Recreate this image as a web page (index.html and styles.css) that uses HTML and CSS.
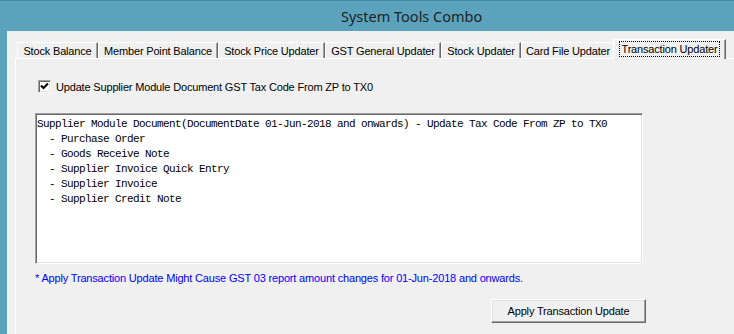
FILE: index.html
```html
<!DOCTYPE html>
<html lang="en">
<head>
    <meta charset="UTF-8">
    <meta name="viewport" content="width=device-width, initial-scale=1.0">
    <title>System Tools Combo</title>
    <link rel="stylesheet" href="styles.css">
</head>
<body>
    <div class="window">
        <div class="titlebar">System Tools Combo</div>
        <div class="client">
            <div class="tabs">
                <div class="tab tab-stock">Stock Balance</div>
                <div class="tab tab-member">Member Point Balance</div>
                <div class="tab tab-price">Stock Price Updater</div>
                <div class="tab tab-gst">GST General Updater</div>
                <div class="tab tab-stockupd">Stock Updater</div>
                <div class="tab tab-card">Card File Updater</div>
                <div class="tab tab-trans active"><span class="focus">Transaction Updater</span></div>
            </div>
            <div class="panel">
                <label class="check-row">
                    <span class="checkbox">
                        <svg width="9" height="9" viewBox="0 0 9 9">
                            <path d="M1 3.5 L3.5 6 L8 1.5" fill="none" stroke="#000" stroke-width="2"/>
                        </svg>
                    </span>
                    Update Supplier Module Document GST Tax Code From ZP to TX0
                </label>
                <pre class="memo">Supplier Module Document(DocumentDate 01-Jun-2018 and onwards) - Update Tax Code From ZP to TX0
  - Purchase Order
  - Goods Receive Note
  - Supplier Invoice Quick Entry
  - Supplier Invoice
  - Supplier Credit Note</pre>
                <p class="note">* Apply Transaction Update Might Cause GST 03 report amount changes for 01-Jun-2018 and onwards.</p>
                <div class="actions">
                    <button type="button" class="btn">Apply Transaction Update</button>
                </div>
            </div>
        </div>
    </div>
</body>
</html>
```

FILE: styles.css
```css
body {
    margin: 0;
    padding: 0;
    font-family: "Liberation Sans", Arial, sans-serif;
    font-size: 11px;
    letter-spacing: -0.17px;
    background: #5ba3bd;
}
.window {
    width: 734px;
    height: 334px;
    overflow: hidden;
    display: flex;
    flex-direction: column;
    background: #5ba3bd;
    border-top: 1px solid #4a8aa3;
    box-sizing: border-box;
}
.titlebar {
    height: 30px;
    line-height: 30px;
    padding-left: 341px;
    font-family: "Noto Sans", "Open Sans", sans-serif;
    font-size: 14.5px;
    letter-spacing: 0;
    color: #222;
}
.client {
    flex: 1;
    margin-left: 7px;
    padding-top: 8px;
    background: #f0f0f0;
    display: flex;
    flex-direction: column;
}
.tabs {
    display: flex;
    align-items: flex-end;
    height: 19px;
    margin-left: 10px;
}
.tab {
    height: 16px;
    line-height: 16px;
    box-sizing: border-box;
    text-align: center;
    color: #000;
    border-top: 1px solid #fff;
    border-left: 1px solid #fff;
    border-right: 1px solid #696969;
    box-shadow: inset -1px 0 #a0a0a0;
}
.tab-stock { width: 81px; }
.tab-member { width: 120px; }
.tab-price { width: 107px; }
.tab-gst { width: 116px; }
.tab-stockupd { width: 80px; }
.tab-card { width: 94px; }
.tab.active {
    position: relative;
    z-index: 1;
    width: 113px;
    height: 20px;
    margin-left: -2px;
    margin-bottom: -1px;
    background: #f0f0f0;
    padding-top: 1px;
    line-height: 14px;
}
.focus {
    display: inline-block;
    padding: 0 1px;
    border: 1px dotted #000;
}
.panel {
    flex: 1;
    margin-left: 8px;
    padding: 21px 0 0 19px;
    border-top: 1px solid #fff;
    border-left: 1px solid #fff;
}
.check-row {
    display: flex;
    align-items: center;
    gap: 5px;
    height: 13px;
    margin-left: 3px;
    color: #000;
}
.checkbox {
    width: 13px;
    height: 13px;
    box-sizing: border-box;
    display: flex;
    align-items: center;
    justify-content: center;
    background: #fff;
    border: 1px solid;
    border-color: #a0a0a0 #fff #fff #a0a0a0;
    box-shadow: inset 1px 1px #696969, inset -1px -1px #e3e3e3;
}
.memo {
    width: 608px;
    height: 151px;
    box-sizing: border-box;
    margin: 20px 0 0 0;
    padding: 3px 0 0 1px;
    background: #fff;
    border: 1px solid;
    border-color: #a0a0a0 #fff #fff #a0a0a0;
    box-shadow: inset 1px 1px #696969, inset -1px -1px #e3e3e3;
    font-family: "Liberation Mono", "Courier New", monospace;
    font-size: 11px;
    letter-spacing: -0.6px;
    line-height: 15px;
    color: #000;
}
.note {
    margin: 8px 0 0 0;
    line-height: 13px;
    color: #0000ff;
}
.actions {
    margin: 14px 0 0 456px;
}
.btn {
    width: 155px;
    height: 24px;
    padding: 0;
    font-family: "Liberation Sans", Arial, sans-serif;
    font-size: 11px;
    letter-spacing: -0.17px;
    color: #000;
    background: #f0f0f0;
    border: 1px solid;
    border-color: #fff #696969 #696969 #fff;
    box-shadow: inset -1px -1px #a0a0a0, inset 1px 1px #e3e3e3;
}
```
